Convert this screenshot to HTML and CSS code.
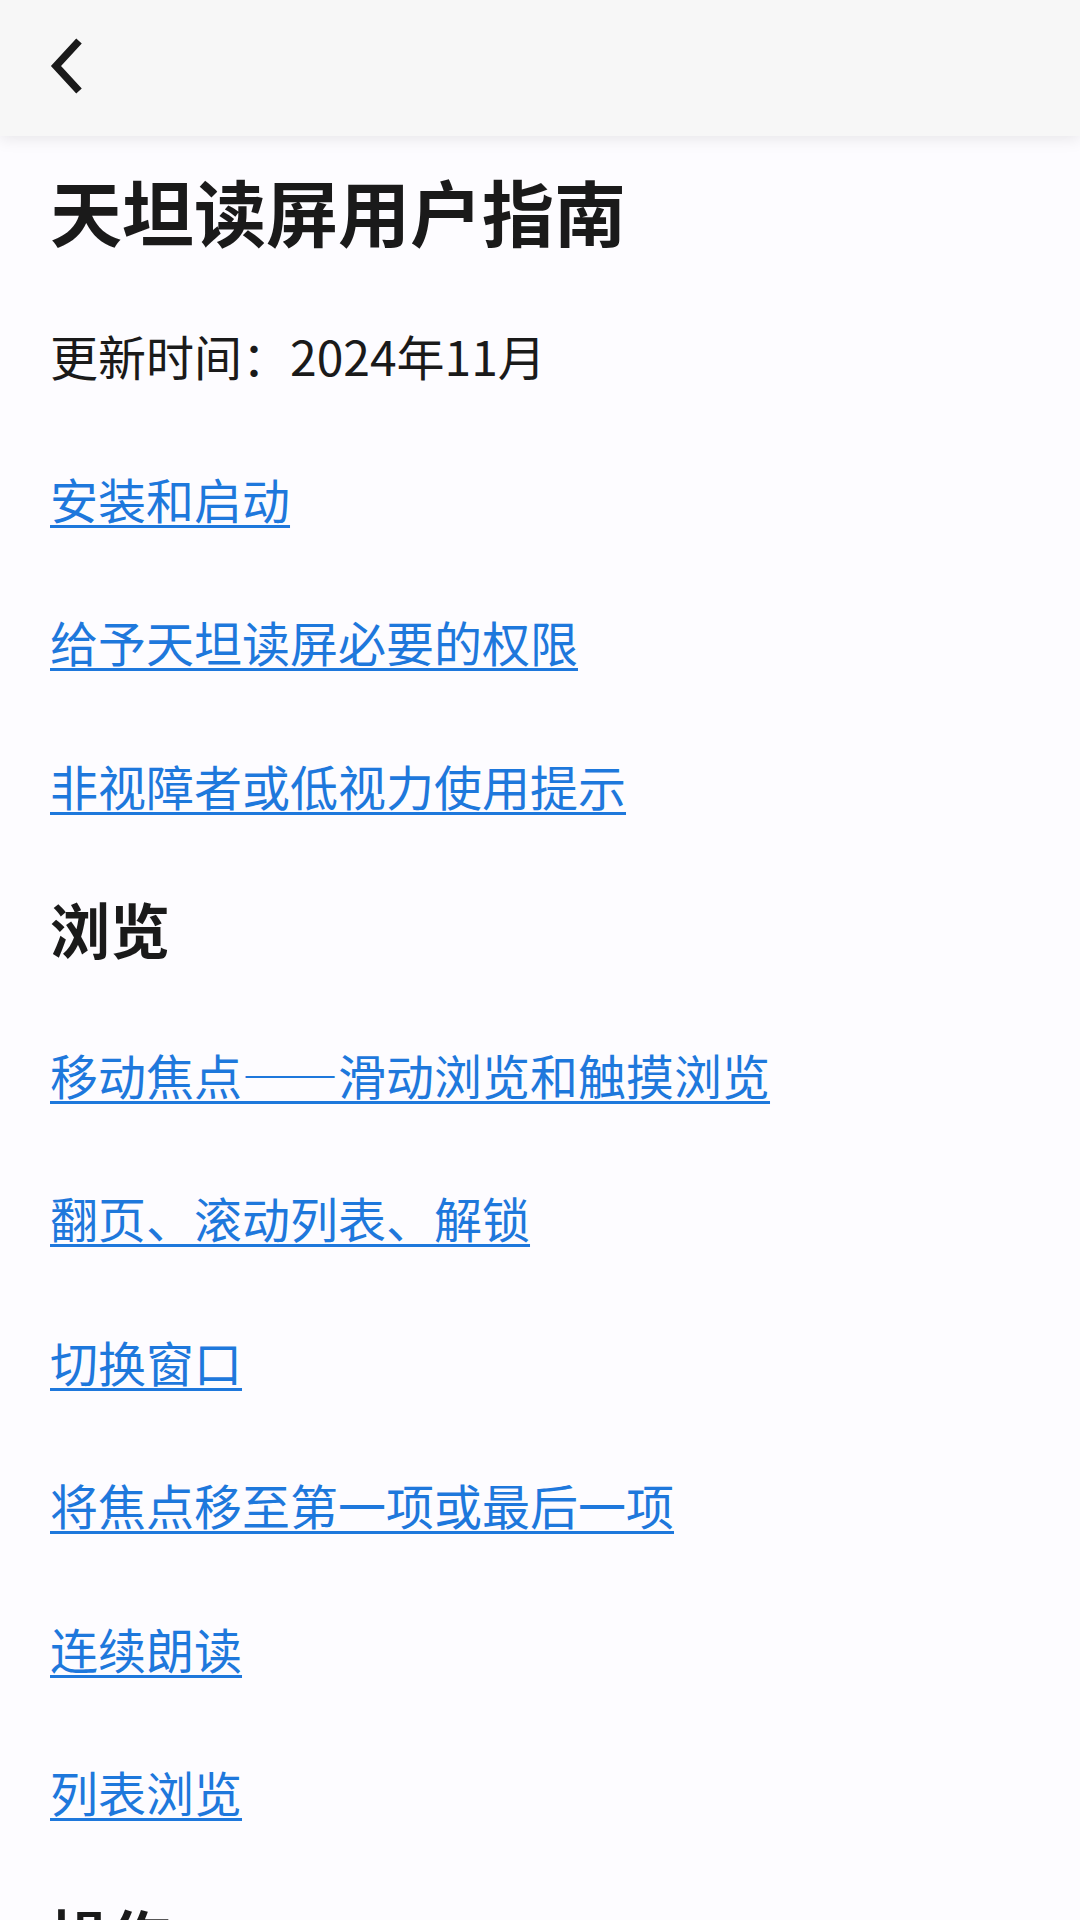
FILE: index.html
```html
<!DOCTYPE html>
<html lang="zh-CN">
<head>
<meta charset="utf-8">
<title>天坦读屏用户指南</title>
<link rel="stylesheet" href="styles.css">
</head>
<body>
<header class="topbar">
  <button class="back" aria-label="返回">
    <svg viewBox="0 0 40 60" width="40" height="60"><path d="M31 5 L8 30 L31 55" fill="none" stroke="#1a1a1a" stroke-width="7.5" stroke-linecap="butt" stroke-linejoin="miter"/></svg>
  </button>
</header>
<main class="content">
  <h1 class="title">天坦读屏用户指南</h1>
  <p class="updated">更新时间：2024年11月</p>
  <ul class="links">
    <li><a href="#">安装和启动</a></li>
    <li><a href="#">给予天坦读屏必要的权限</a></li>
    <li><a href="#">非视障者或低视力使用提示</a></li>
  </ul>
  <h2 class="section">浏览</h2>
  <ul class="links">
    <li><a href="#">移动焦点——滑动浏览和触摸浏览</a></li>
    <li><a href="#">翻页、滚动列表、解锁</a></li>
    <li><a href="#">切换窗口</a></li>
    <li><a href="#">将焦点移至第一项或最后一项</a></li>
    <li><a href="#">连续朗读</a></li>
    <li><a href="#">列表浏览</a></li>
  </ul>
  <h2 class="section">操作</h2>
</main>
</body>
</html>
```
FILE: styles.css
```css
html, body {
  margin: 0;
  padding: 0;
  background: #fdfcff;
}
body {
  font-family: "Noto Sans CJK SC", "Noto Sans", sans-serif;
  color: #1a1a1a;
  height: 1920px;
  overflow: hidden;
}
.topbar {
  height: 136px;
  background: #f7f7f7;
  box-shadow: 0 2px 16px rgba(0,0,0,0.10);
  display: flex;
  align-items: center;
  padding-left: 48px;
  position: relative;
  z-index: 1;
}
.back {
  border: 0;
  background: none;
  padding: 0;
  margin: 0;
  width: 40px;
  height: 60px;
  display: flex;
  margin-top: -4px;
}
.content {
  padding: 0 50px;
}
.title {
  margin: 24px 0 0;
  font-size: 72px;
  line-height: 100px;
  font-weight: 700;
}
.updated {
  margin: 59px 0 0;
  font-size: 48px;
  line-height: 72px;
}
.links {
  list-style: none;
  margin: 0;
  padding: 0;
  display: flex;
  flex-direction: column;
  gap: 71.5px;
  margin-top: 70.5px;
}
.section + .links {
  margin-top: 69.5px;
}
.links li {
  font-size: 48px;
  line-height: 72px;
}
.links a {
  color: #1e78dc;
  text-decoration: underline;
  text-decoration-thickness: 3px;
  text-underline-offset: 6px;
}
.section {
  margin: 67.5px 0 0;
  font-size: 60px;
  line-height: 80px;
  font-weight: 700;
}
```
